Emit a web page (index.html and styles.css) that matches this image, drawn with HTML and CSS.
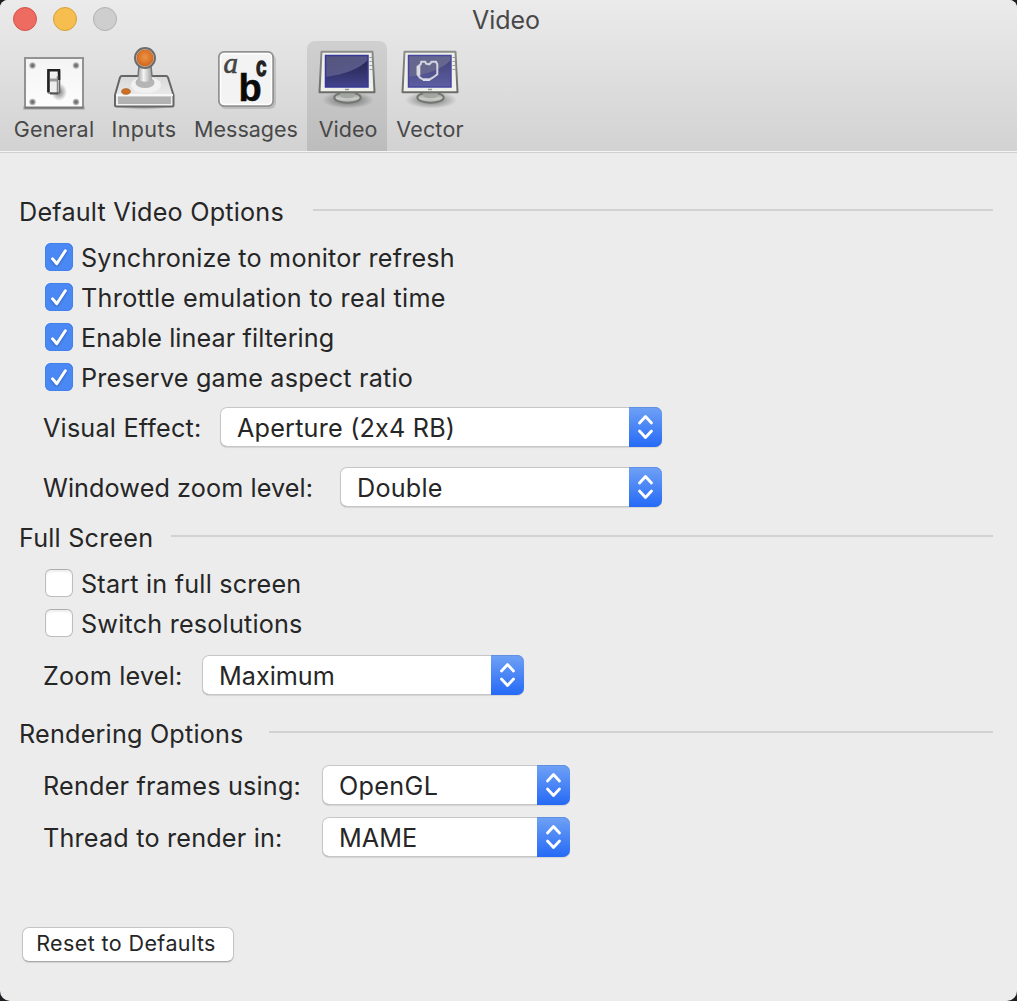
FILE: index.html
```html
<!DOCTYPE html>
<html lang="en">
<head>
<meta charset="utf-8">
<title>Video</title>
<link rel="stylesheet" href="styles.css">
</head>
<body>
<svg class="defs" width="0" height="0" aria-hidden="true">
  <defs>
    <linearGradient id="plate" x1="0" y1="0" x2="0" y2="1"><stop offset="0" stop-color="#f4f4f4"/><stop offset="1" stop-color="#fdfdfd"/></linearGradient>
    <linearGradient id="metal" x1="0" y1="0" x2="1" y2="0"><stop offset="0" stop-color="#a4a4a4"/><stop offset=".4" stop-color="#f4f4f4"/><stop offset="1" stop-color="#a0a0a0"/></linearGradient>
    <linearGradient id="base" x1="0" y1="0" x2="0" y2="1"><stop offset="0" stop-color="#d8d8d8"/><stop offset="1" stop-color="#f4f4f4"/></linearGradient>
    <radialGradient id="ball" cx=".5" cy=".45" r=".55"><stop offset="0" stop-color="#ee9345"/><stop offset="1" stop-color="#d0661b"/></radialGradient>
    <radialGradient id="screw"><stop offset="0" stop-color="#5c5c5c"/><stop offset=".5" stop-color="#888"/><stop offset="1" stop-color="#ddd"/></radialGradient>
    <linearGradient id="screen" x1="0" y1="0" x2=".4" y2="1"><stop offset="0" stop-color="#55557c"/><stop offset="1" stop-color="#5a5b92"/></linearGradient>
    <linearGradient id="shade" x1="0" y1="0" x2="0" y2="1"><stop offset="0" stop-color="#26254f"/><stop offset="1" stop-color="#42438c"/></linearGradient>
    <linearGradient id="shade2" x1="0" y1="0" x2="0" y2="1"><stop offset="0" stop-color="#45457c"/><stop offset="1" stop-color="#5d5fa2"/></linearGradient>
    <linearGradient id="rim" x1="0" y1="0" x2="0" y2="1"><stop offset="0" stop-color="#8b8d8a"/><stop offset="1" stop-color="#6c6e6a"/></linearGradient>
    <linearGradient id="foot" x1="0" y1="0" x2="0" y2="1"><stop offset="0" stop-color="#8e908b"/><stop offset=".6" stop-color="#c9cbc6"/><stop offset="1" stop-color="#b0b2ad"/></linearGradient>
    <radialGradient id="shadow"><stop offset="0" stop-color="#000" stop-opacity=".5"/><stop offset="1" stop-color="#000" stop-opacity="0"/></radialGradient>
    <g id="monitor">
      <ellipse cx="33" cy="54" rx="26" ry="8.500" fill="url(#shadow)"/>
      <ellipse cx="32.500" cy="51.500" rx="13.200" ry="5.200" fill="url(#foot)" stroke="#737571" stroke-width="2"/>
      <path d="M25 47h15l-1 4q-6.500 2.500-13 0z" fill="#a4a6a1"/>
      <path d="M6.500 5.700h51l2 40.500h-55z" fill="#f0f0eb" stroke="url(#rim)" stroke-width="2" stroke-linejoin="round"/>
      <path d="M54.500 11.500h3M54.500 15.500h3M54.500 19.500h3M54.500 23.500h3" stroke="#999" stroke-width="1.200"/>
      <path d="M30 43.500h4" stroke="#999" stroke-width="1.500"/>
    </g>
  </defs>
</svg>
<div class="window">
  <header class="toolbar">
    <div class="titlebar">
      <div class="lights"><i class="light red"></i><i class="light yellow"></i><i class="light gray"></i></div>
      <h1 class="title">Video</h1>
    </div>
    <nav class="tabs">
      <a class="tab general">
        <svg class="icon" viewBox="0 0 64 64">
          <path d="M1 60h62v4H1z" fill="#000" opacity=".12"/>
          <rect x="3" y="12" width="58" height="50" fill="url(#plate)" stroke="#929292" stroke-width="2"/>
          <path d="M3 61.500h58" stroke="#777" stroke-width="2"/>
          <g fill="url(#screw)"><circle cx="10.500" cy="19.500" r="3.500"/><circle cx="54" cy="19.500" r="3.500"/><circle cx="10.500" cy="56" r="3.500"/><circle cx="54" cy="56" r="3.500"/></g>
          <ellipse cx="37" cy="46" rx="8" ry="9" fill="url(#shadow)"/>
          <rect x="26" y="24" width="11.500" height="23" rx="1" fill="#f4f4f4" stroke="#666" stroke-width="1.600"/>
          <path d="M26.500 46V24.200h10.500V34" fill="none" stroke="#222" stroke-width="2.600"/>
          <rect x="28.500" y="27.500" width="7" height="19" rx="2" fill="#eee"/>
          <path d="M28 34h8" stroke="#999" stroke-width="3"/>
          <path d="M35.500 30v16" stroke="#888" stroke-width="1.500"/>
          <path d="M28 47.500h8" stroke="#555" stroke-width="1.800"/>
        </svg>
        <span>General</span>
      </a>
      <a class="tab inputs">
        <svg class="icon" viewBox="0 0 64 64">
          <ellipse cx="32" cy="59" rx="32" ry="5" fill="url(#shadow)"/>
          <path d="M10 30h44q1.500 0 2 1.500L61.500 49v10q0 1.500-1.500 1.500H4.500Q3 60.500 3 59V49L8 31.500Q8.500 30 10 30z" fill="url(#base)" stroke="#666" stroke-width="2" stroke-linejoin="round"/>
          <path d="M6 50.500h53V58H6z" fill="#b2b2b2"/>
          <path d="M4 49h57" stroke="#f7f7f7" stroke-width="2"/>
          <ellipse cx="34" cy="39" rx="15" ry="8" fill="#f1f1f1"/>
          <ellipse cx="33" cy="36.500" rx="9.500" ry="5.500" fill="#b5b5b5"/>
          <path d="M27 18h12l1 16q-7 3.500-14 0z" fill="url(#metal)"/>
          <path d="M27 20l-1 10M39 20l1 10" stroke="#777" stroke-width="1.500"/>
          <circle cx="33" cy="12" r="10" fill="#c6c6c6" stroke="#6c6c6c" stroke-width="2"/>
          <circle cx="33" cy="12" r="8.500" fill="url(#ball)"/>
          <ellipse cx="14" cy="45.500" rx="4.300" ry="2.700" fill="#d07020" stroke="#aa6630"/>
        </svg>
        <span>Inputs</span>
      </a>
      <a class="tab messages">
        <svg class="icon" viewBox="0 0 64 64">
          <rect x="6" y="8" width="56" height="55" rx="6" fill="#000" opacity=".13"/>
          <rect x="5" y="6" width="54" height="54" rx="5" fill="#f3f3f3" stroke="#929292" stroke-width="2"/>
          <rect x="6.500" y="7.500" width="51" height="51" rx="4" fill="none" stroke="#fff" stroke-width="1.500"/>
          <text x="9.500" y="26.500" class="glyph-a">a</text>
          <text x="42" y="30" class="glyph-c" textLength="10.500" lengthAdjust="spacingAndGlyphs">c</text>
          <text x="24.500" y="54.500" class="glyph-b">b</text>
        </svg>
        <span>Messages</span>
      </a>
      <a class="tab video selected">
        <svg class="icon" viewBox="0 0 64 64">
          <use href="#monitor"/>
          <path d="M10.500 9.500H53V41H10.500z" fill="url(#screen)"/>
          <path d="M53 14Q40 27 10.500 31v10H53z" fill="url(#shade)"/>
          <path d="M10.500 9.500H53V41H10.500z" fill="none" stroke="#37379a" stroke-width="1.500"/>
        </svg>
        <span>Video</span>
      </a>
      <a class="tab vector">
        <svg class="icon" viewBox="0 0 64 64">
          <use href="#monitor"/>
          <path d="M10.500 9.500H53V41H10.500z" fill="#66678f"/>
          <path d="M53 14Q40 27 10.500 31v10H53z" fill="url(#shade2)"/>
          <path d="M10.500 9.500H53V41H10.500z" fill="none" stroke="#4545a0" stroke-width="1.500"/>
          <path d="M19.500 20.700v7.600l2.500 3.400 2.700 1.600 6.600.4 3.400-2 2-1.400 2.600-2v-10l-1.300-2.600h-4.300l-2.400 2.600-3.300-.6-.7-2h-4l-.6 2.600z" fill="none" stroke="#d4d4de" stroke-width="2"/>
          <path d="M21 20v9.500M25 33.700h7" stroke="#dcdce4" stroke-width="2.600"/>
        </svg>
        <span>Vector</span>
      </a>
    </nav>
  </header>

  <main class="content">
    <section class="group defaults">
      <h2 class="heading"><span>Default Video Options</span></h2>
      <div class="checks">
        <label class="check"><i class="box on"><svg viewBox="0 0 28 28"><path d="M7.500 15.800l4.300 5L20.300 7.800"/></svg></i><span>Synchronize to monitor refresh</span></label>
        <label class="check"><i class="box on"><svg viewBox="0 0 28 28"><path d="M7.500 15.800l4.300 5L20.300 7.800"/></svg></i><span class="wide">Throttle emulation to real time</span></label>
        <label class="check"><i class="box on"><svg viewBox="0 0 28 28"><path d="M7.500 15.800l4.300 5L20.300 7.800"/></svg></i><span class="narrow">Enable linear filtering</span></label>
        <label class="check"><i class="box on"><svg viewBox="0 0 28 28"><path d="M7.500 15.800l4.300 5L20.300 7.800"/></svg></i><span>Preserve game aspect ratio</span></label>
      </div>
      <div class="field effect"><label>Visual Effect:</label><div class="popup"><span>Aperture (2x4 RB)</span><i class="arrows"><svg viewBox="0 0 33 40"><path d="M10.500 16l6-6.500 6 6.500M10.500 24l6 6.500 6-6.500"/></svg></i></div></div>
      <div class="field windowed"><label class="narrow">Windowed zoom level:</label><div class="popup"><span>Double</span><i class="arrows"><svg viewBox="0 0 33 40"><path d="M10.500 16l6-6.500 6 6.500M10.500 24l6 6.500 6-6.500"/></svg></i></div></div>
    </section>
    <section class="group fullscreen">
      <h2 class="heading"><span>Full Screen</span></h2>
      <div class="checks">
        <label class="check"><i class="box"></i><span>Start in full screen</span></label>
        <label class="check"><i class="box"></i><span>Switch resolutions</span></label>
      </div>
      <div class="field zoom"><label>Zoom level:</label><div class="popup"><span class="tight">Maximum</span><i class="arrows"><svg viewBox="0 0 33 40"><path d="M10.500 16l6-6.500 6 6.500M10.500 24l6 6.500 6-6.500"/></svg></i></div></div>
    </section>
    <section class="group rendering">
      <h2 class="heading"><span>Rendering Options</span></h2>
      <div class="field render"><label>Render frames using:</label><div class="popup"><span class="wide">OpenGL</span><i class="arrows"><svg viewBox="0 0 33 40"><path d="M10.500 16l6-6.500 6 6.500M10.500 24l6 6.500 6-6.500"/></svg></i></div></div>
      <div class="field thread"><label>Thread to render in:</label><div class="popup"><span class="tight">MAME</span><i class="arrows"><svg viewBox="0 0 33 40"><path d="M10.500 16l6-6.500 6 6.500M10.500 24l6 6.500 6-6.500"/></svg></i></div></div>
    </section>
    <button class="reset">Reset to Defaults</button>
  </main>
</div>
</body>
</html>
```
FILE: styles.css
```css
* { box-sizing: border-box; }

body {
  margin: 0;
  background: #1d1d24;
  font-family: Inter, "Liberation Sans", sans-serif;
  font-size: 25.200px;
  font-feature-settings: "calt" 0;
  letter-spacing: .2px;
  color: #262626;
}

.defs { display: block; width: 0; height: 0; }

.window {
  width: 1017px;
  height: 1001px;
  border-radius: 8px 8px 10px 10px;
  background: #ececec;
  overflow: hidden;
}

.toolbar {
  height: 153px;
  background: linear-gradient(#ebebeb, #d2d2d2);
  border-bottom: 1px solid #d0d0d0;
  box-shadow: inset 0 -1px #f4f4f4;
}

.titlebar {
  display: grid;
  grid-template-columns: 119px 1fr 125px;
  height: 41px;
}

.lights { display: flex; gap: 16px; padding: 7px 0 0 13px; }
.light { width: 24px; height: 24px; border-radius: 50%; border: 1px solid; }
.red { background: #ed6b60; border-color: #d35449; }
.yellow { background: #f5be4f; border-color: #d6a03c; }
.gray { background: #cecece; border-color: #b1b1b1; }

.title {
  margin: 0;
  padding-left: 1px;
  text-align: center;
  font-size: 25px;
  font-weight: 400;
  letter-spacing: 0;
  line-height: 40px;
  color: #484848;
}

.tabs { display: flex; height: 110px; padding-left: 4px; }
.tab {
  display: flex;
  flex-direction: column;
  align-items: center;
  padding-top: 5px;
  font-size: 21.500px;
  line-height: 38px;
  color: #484848;
}
.icon { width: 64px; height: 64px; flex: none; }
.general { width: 100px; }
.inputs { width: 80px; margin-right: 1px; letter-spacing: .4px; }
.messages { width: 122px; letter-spacing: 0; }
.video { width: 80px; letter-spacing: 0; }
.video span { padding-left: 2px; }
.vector { width: 86px; }
.selected { background: linear-gradient(#d0d0d0, #bcbcbc); border-radius: 8px 8px 0 0; }

.glyph-a { font: italic 29px "Liberation Serif", serif; fill: #444; stroke: #444; stroke-width: .6px; letter-spacing: 0; }
.glyph-b { font: bold 38px "Liberation Sans", sans-serif; fill: #0a0a0a; stroke: #0a0a0a; stroke-width: .5px; letter-spacing: 0; }
.glyph-c { font: bold 27px "Liberation Sans", sans-serif; fill: #222; stroke: #222; stroke-width: 1.300px; letter-spacing: 0; }

.content { padding: 37px 24px 0 19px; }

.heading {
  display: flex;
  align-items: center;
  height: 40px;
  margin: 0;
  font-size: inherit;
  font-weight: 400;
  white-space: nowrap;
}
.heading span { flex: none; padding-top: 4px; }
.heading::after { content: ""; flex: 1; height: 2px; background: #d2d2d2; }
.defaults .heading span { width: 294px; }
.fullscreen .heading span { width: 152px; }
.rendering .heading span { width: 250px; }

.checks { padding: 7px 0 0 26px; }
.check { display: flex; align-items: center; gap: 8px; height: 40px; }
.check span { padding-top: 2px; }
.wide { letter-spacing: .32px; }
.narrow { letter-spacing: .1px; }
.tight { letter-spacing: 0; }

.box {
  width: 28px;
  height: 28px;
  border-radius: 6px;
  border: 1px solid #bdbdbd;
  border-top-color: #adadad;
  background: #fff;
  box-shadow: inset 0 2px 2px rgba(0, 0, 0, .07);
}
.box.on { border: 0; background: #4a88f4; box-shadow: inset 0 0 0 1px #4280ee; }
.box svg { display: block; width: 28px; height: 28px; filter: drop-shadow(0 1px 1px rgba(0, 30, 120, .4)); }
.box path { fill: none; stroke: #fff; stroke-width: 3; stroke-linecap: round; stroke-linejoin: round; }

.field { display: flex; align-items: center; height: 40px; padding-left: 24px; white-space: nowrap; }
.field label { padding-top: 2px; flex: none; }
.popup {
  display: flex;
  align-items: center;
  justify-content: space-between;
  height: 40px;
  padding-left: 17px;
  border-radius: 7px;
  background: #fff;
  box-shadow: inset 0 0 0 1px #c6c6c6, inset 0 -1px #a5a5a5, 0 1px 1px rgba(0, 0, 0, .1);
}
.popup span { padding-top: 2px; }
.arrows { width: 33px; height: 40px; border-radius: 0 7px 7px 0; background: linear-gradient(#6fa1f5, #256af6); box-shadow: inset 0 1px #5f90e4; }
.arrows svg { display: block; width: 33px; height: 40px; }
.arrows path { fill: none; stroke: #fff; stroke-width: 2.800; stroke-linecap: round; stroke-linejoin: round; }

.effect { margin-top: 10px; }
.effect label { width: 177px; }
.effect .popup { width: 442px; }
.windowed { margin: 20px 0 9px; }
.windowed label { width: 297px; }
.windowed .popup { width: 322px; }
.zoom { margin: 12px 0 17px; }
.zoom label { width: 159px; }
.zoom .popup { width: 322px; }
.render { margin-top: 13px; }
.thread { margin-top: 12px; }
.render label, .thread label { width: 279px; }
.render .popup, .thread .popup { width: 248px; }

.reset {
  display: block;
  width: 212px;
  height: 35px;
  margin: 70px 0 0 3px;
  padding: 0 4px 3px 0;
  border: 1px solid #c4c4c4;
  border-bottom-color: #a8a8a8;
  border-radius: 7px;
  background: #fff;
  box-shadow: 0 1px 1px rgba(0, 0, 0, .1);
  font: 21.500px/30px Inter, "Liberation Sans", sans-serif;
  letter-spacing: .4px;
  color: #262626;
  white-space: nowrap;
}
```
